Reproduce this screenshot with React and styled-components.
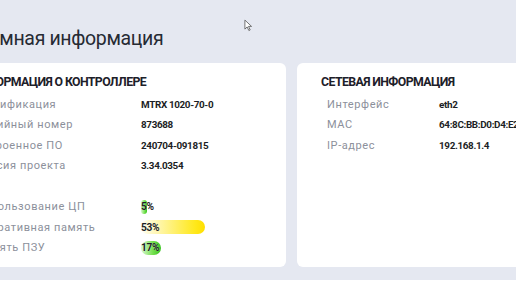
import React from "react";
import styled, { createGlobalStyle } from "styled-components";

const GlobalStyle = createGlobalStyle`
  html, body {
    margin: 0;
    padding: 0;
    background: #ffffff;
    overflow: hidden;
  }
  body {
    font-family: Roboto, "Noto Sans", sans-serif;
  }
`;

const controller = [
  { label: "Модификация", value: "MTRX 1020-70-0" },
  { label: "Серийный номер", value: "873688" },
  { label: "Встроенное ПО", value: "240704-091815" },
  { label: "Версия проекта", value: "3.34.0354" },
];

const usage = [
  { label: "Использование ЦП", value: 5, tone: "green" },
  { label: "Оперативная память", value: 53, tone: "yellow" },
  { label: "Память ПЗУ", value: 17, tone: "green" },
];

const network = [
  { label: "Интерфейс", value: "eth2" },
  { label: "MAC", value: "64:8C:BB:D0:D4:E2" },
  { label: "IP-адрес", value: "192.168.1.4" },
];

function App() {
  return (
    <>
      <GlobalStyle />
      <Page>
        <Title>Системная информация</Title>
        <Cards>
          <Card>
            <CardTitle>Информация о контроллере</CardTitle>
            <InfoTable $labelWidth={165}>
              {controller.map((row) => (
                <React.Fragment key={row.label}>
                  <Label>{row.label}</Label>
                  <Value>{row.value}</Value>
                </React.Fragment>
              ))}
              <Spacer />
              {usage.map((row) => (
                <React.Fragment key={row.label}>
                  <Label>{row.label}</Label>
                  <Value>
                    <Track>
                      <Fill $tone={row.tone} style={{ width: `${row.value}%` }} />
                      <Percent>{row.value}%</Percent>
                    </Track>
                  </Value>
                </React.Fragment>
              ))}
            </InfoTable>
          </Card>
          <Card>
            <CardTitle>Сетевая информация</CardTitle>
            <InfoTable $labelWidth={112}>
              {network.map((row) => (
                <React.Fragment key={row.label}>
                  <Label>{row.label}</Label>
                  <Value>{row.value}</Value>
                </React.Fragment>
              ))}
            </InfoTable>
          </Card>
        </Cards>
        <Cursor viewBox="0 0 10 14">
          <path d="M1 1 L1 11 L3.5 8.6 L5.4 12.6 L6.9 11.9 L5 8 L8.4 8 Z" fill="#fff" stroke="#555" strokeWidth="0.9" strokeLinejoin="round" />
        </Cursor>
      </Page>
    </>
  );
}

export default App;

const Page = styled.div`
  position: relative;
  background: #e5e8f1;
  margin-left: -54px;
  width: 720px;
  padding: 27px 0 13px;
  box-sizing: border-box;
`;

const Title = styled.h1`
  margin: 0 0 12px 2px;
  font-size: 19.5px;
  line-height: 24px;
  font-weight: 400;
  letter-spacing: -0.35px;
  color: #262a33;
`;

const Cards = styled.div`
  display: grid;
  grid-template-columns: 340px 344px;
  gap: 11px;
`;

const Card = styled.div`
  background: #ffffff;
  border-radius: 6px;
  padding: 12px 24px 9px;
`;

const CardTitle = styled.div`
  font-size: 12.3px;
  line-height: 14px;
  font-weight: 700;
  letter-spacing: -0.6px;
  text-transform: uppercase;
  color: #1d2029;
  margin-bottom: 5px;
`;

const InfoTable = styled.div`
  display: grid;
  grid-template-columns: ${(p) => p.$labelWidth}px 1fr;
  grid-auto-rows: 20.5px;
  align-items: center;
  padding-left: 6px;
`;

const Label = styled.div`
  font-size: 11px;
  letter-spacing: 0.6px;
  color: #8c909b;
  white-space: nowrap;
`;

const Value = styled.div`
  font-size: 9.9px;
  font-weight: 700;
  letter-spacing: -0.35px;
  color: #1c1e25;
  white-space: nowrap;
`;

const Spacer = styled.div`
  grid-column: 1 / -1;
`;

const Track = styled.div`
  display: grid;
  width: 120px;
  height: 14px;
  align-items: center;
`;

const Fill = styled.div`
  grid-area: 1 / 1;
  height: 14px;
  border-radius: 7px;
  background: ${(p) =>
    p.$tone === "yellow"
      ? "linear-gradient(90deg, rgba(255,248,210,0.3) 0%, #ffe81a 85%, #ffdf00 100%)"
      : "linear-gradient(90deg, #d9f7cf 0%, #74e04e 60%, #36c41c 100%)"};
`;

const Percent = styled.span`
  grid-area: 1 / 1;
  position: relative;
  font-size: 10.2px;
  text-shadow: 0 0 1px rgba(255, 255, 255, 0.6);
`;

const Cursor = styled.svg`
  position: absolute;
  left: 298px;
  top: 19px;
  width: 9px;
  height: 13px;
`;
